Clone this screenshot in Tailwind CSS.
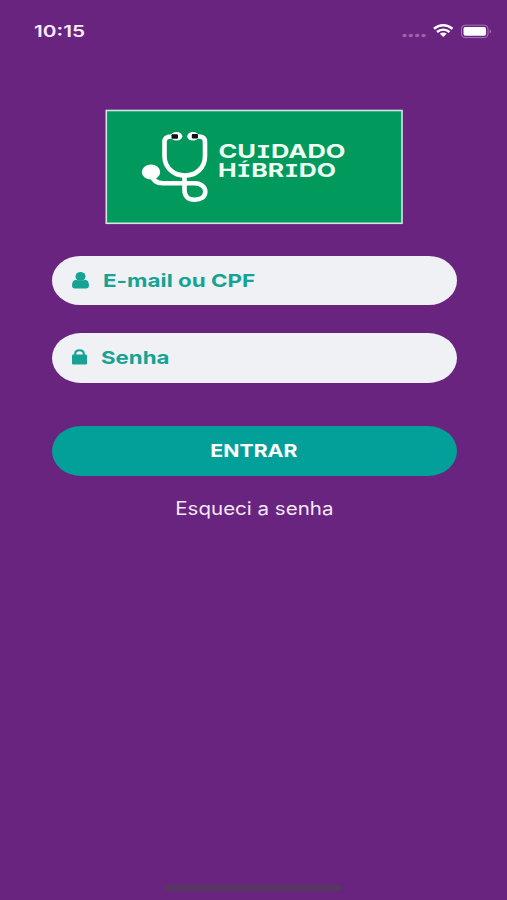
<!DOCTYPE html>
<html lang="pt-BR">
<head>
  <meta charset="UTF-8">
  <meta name="viewport" content="width=device-width, initial-scale=1.0">
  <title>Cuidado Híbrido</title>
  <script src="https://cdn.jsdelivr.net/npm/@tailwindcss/browser@4"></script>
</head>
<body class="bg-[#68247f] font-['Inter',sans-serif] text-white">
  <div class="flex h-[900px] w-[507px] flex-col overflow-hidden">
    <!-- Status bar -->
    <header class="flex h-[62px] items-center justify-between pr-[14px] pl-[34px]">
      <span class="origin-left scale-x-[1.3] text-base font-semibold text-[#fbeafd]">10:15</span>
      <svg class="h-5 w-[92px]" viewBox="0 0 92 20">
        <g fill="#9a62a8">
          <ellipse cx="3.5" cy="14.5" rx="2.2" ry="1.8"/>
          <ellipse cx="9.8" cy="14.5" rx="2.2" ry="1.8"/>
          <ellipse cx="16.2" cy="14.5" rx="2.2" ry="1.8"/>
          <ellipse cx="22.5" cy="14.5" rx="2.2" ry="1.8"/>
        </g>
        <g fill="none" stroke="#fff" stroke-width="2.5">
          <path d="M33 7.8C38.5 2.9 46 2.9 51.5 7.8"/>
          <path d="M36 11C39.7 7.9 44.8 7.9 48.5 11"/>
        </g>
        <path d="M38.8 12.8Q42.25 10.2 45.7 12.8L42.25 16Z" fill="#fff"/>
        <rect x="60.5" y="4.2" width="26.5" height="12.4" rx="3.5" fill="none" stroke="#a878b4" stroke-width="1"/>
        <rect x="62.5" y="6" width="22.5" height="8.8" rx="1.8" fill="#fff"/>
        <path d="M88.7 8.3Q91.5 10.4 88.7 12.5Z" fill="#a878b4"/>
      </svg>
    </header>

    <main class="flex flex-col items-center pt-[47px]">
      <!-- Logo -->
      <svg class="h-[116px] w-[298px]" viewBox="105 109 298 116">
        <rect x="106.3" y="110.5" width="295.7" height="112.8" fill="#019a5c" stroke="#d5e5e0" stroke-width="1.6"/>
        <g fill="none" stroke="#fff" stroke-width="4.6" stroke-linecap="round">
          <path d="M176 136.5H171Q164.5 136.5 164.5 142V156C164.5 168 174 175.5 185 175.5S205 168 205 156V142Q205 136.5 199 136.5H192"/>
          <path d="M152 175C153 181 157 183.3 163 183.3H195C201 183.3 205.3 187 205.3 191.5C205.3 197 201 199.7 194.5 199.7C188 199.7 184.5 196 184.5 190V176"/>
        </g>
        <ellipse cx="151" cy="172" rx="9.2" ry="7.5" fill="#fff"/>
        <ellipse cx="176.500" cy="136.3" rx="5.8" ry="4.3" fill="#fff"/>
        <ellipse cx="193" cy="136.3" rx="5.8" ry="4.3" fill="#fff"/>
        <rect x="171.5" y="134.3" width="6.5" height="4.5" rx="1" fill="#111"/>
        <rect x="191.8" y="134" width="6.2" height="4.6" rx="1" fill="#111"/>
        <g fill="#f0fff4" class="font-['Inter',sans-serif] font-bold" font-size="19">
          <text x="218.500" y="158" textLength="127" lengthAdjust="spacingAndGlyphs">CU<tspan class="font-['DejaVu_Sans_Mono',monospace]" font-size="18.5">I</tspan>DADO</text>
          <text x="218" y="177" textLength="118" lengthAdjust="spacingAndGlyphs">H<tspan class="font-['DejaVu_Sans_Mono',monospace]" font-size="18.5">Í</tspan>BR<tspan class="font-['DejaVu_Sans_Mono',monospace]" font-size="18.5">I</tspan>DO</text>
        </g>
      </svg>

      <!-- Login form -->
      <div class="mt-[31px] ml-px flex h-[49px] w-[405px] items-center rounded-[29px/25px] bg-[#eff1f5] pl-5 text-[#16a394]">
        <svg class="h-[18px] w-[17px]" viewBox="0 0 17 18" fill="currentColor">
          <path d="M0 13.5C0 10 1.5 7.8 4 7.7Q8.5 10 13 7.7C15.5 7.8 17 10 17 13.5Q17 16.5 14 16.5H3Q0 16.5 0 13.5Z"/>
          <ellipse cx="8.5" cy="4.5" rx="5" ry="4.5"/>
        </svg>
        <span class="ml-[14px] origin-left scale-x-[1.245] text-lg font-bold whitespace-nowrap">E-mail ou CPF</span>
      </div>
      <div class="mt-7 ml-px flex h-[50px] w-[405px] items-center rounded-[29px/25px] bg-[#eff1f5] pl-5 text-[#16a394]">
        <svg class="h-[18px] w-[15px]" viewBox="0 0 15 18" fill="currentColor">
          <path d="M3.2 6.5V4.8Q3.2 1.2 7.5 1.2T11.8 4.8V6.5" fill="none" stroke="currentColor" stroke-width="2.1"/>
          <rect y="5.6" width="15" height="9.9" rx="1.2"/>
        </svg>
        <span class="ml-[14px] origin-left scale-x-[1.235] text-lg font-bold whitespace-nowrap">Senha</span>
      </div>
      <button class="mt-[43px] ml-px flex h-[50px] w-[405px] items-center justify-center rounded-[29px/25px] bg-[#02a098]">
        <span class="scale-x-[1.18] text-lg font-bold">ENTRAR</span>
      </button>
      <a href="#" class="mt-[19px] ml-px scale-x-[1.14] text-lg text-[#f5e8f8]">Esqueci a senha</a>
    </main>

    <!-- Home indicator -->
    <div class="mx-auto mt-auto mb-[9px] h-[6px] w-[179px] rounded-full bg-[#553761]"></div>
  </div>
</body>
</html>
